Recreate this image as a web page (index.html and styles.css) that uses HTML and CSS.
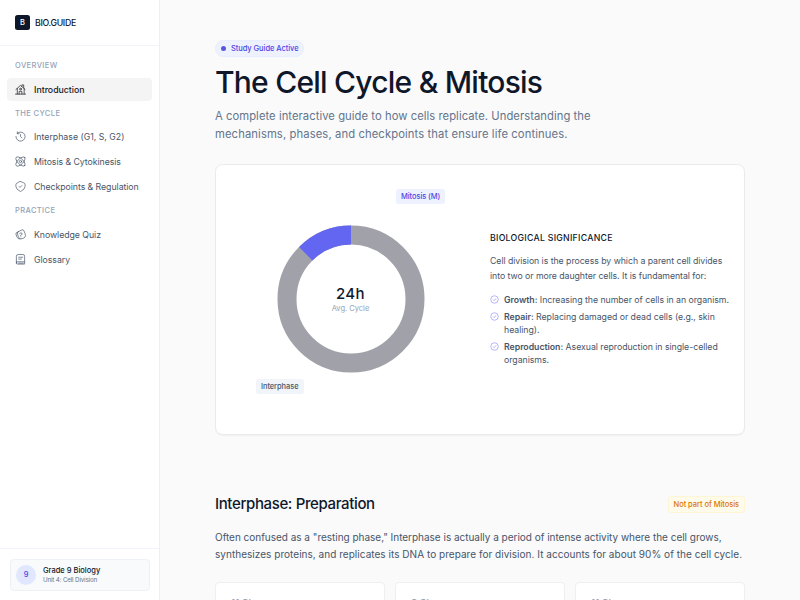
FILE: index.html
```html
<!DOCTYPE html>
<html lang="en">
<head>
    <meta charset="UTF-8">
    <meta name="viewport" content="width=device-width, initial-scale=1.0">
    <title>The Cell Cycle &amp; Mitosis</title>
    <link rel="stylesheet" href="styles.css">
</head>
<body>
    <aside class="sidebar">
        <div class="brand">
            <span class="brand-logo">B</span>
            <span class="brand-name">BIO.GUIDE</span>
        </div>

        <nav class="nav">
            <p class="nav-title">OVERVIEW</p>
            <a class="nav-item active">
                <svg class="icon" viewBox="0 0 24 24"><path d="M1 22h22M2 12l10-9 10 9M5 10v12M20 10v12M15 5V2h4v6M9 22v-6h6v6"/><circle cx="12" cy="11" r="2"/></svg>
                <span>Introduction</span>
            </a>
            <p class="nav-title cycle">THE CYCLE</p>
            <a class="nav-item">
                <svg class="icon" viewBox="0 0 24 24"><path d="M5 5a10 10 0 1 1-3 7M5 2v4h4M12 8v4l3 3"/></svg>
                <span>Interphase (G1, S, G2)</span>
            </a>
            <a class="nav-item">
                <svg class="icon" viewBox="0 0 24 24"><ellipse cx="12" cy="12" rx="13" ry="6" transform="rotate(45 12 12)"/><ellipse cx="12" cy="12" rx="13" ry="6" transform="rotate(-45 12 12)"/><circle cx="12" cy="12" r="2.5"/></svg>
                <span class="tight">Mitosis &amp; Cytokinesis</span>
            </a>
            <a class="nav-item">
                <svg class="icon" viewBox="0 0 24 24"><path d="M12 1l7 3q3 1 3 4v4q0 6-10 11Q2 18 2 12V8q0-3 3-4zM9 12l2 2 4-4"/></svg>
                <span class="tight">Checkpoints &amp; Regulation</span>
            </a>
            <p class="nav-title practice">PRACTICE</p>
            <a class="nav-item">
                <svg class="icon" viewBox="0 0 24 24"><path d="M7 6l8-4q3-1 4 1l3 7q3 9-6 11-7 2-9-5L5 9q-1-2 2-3zM6 7q-5 1-4 4l2 6q2 5 7 5M10 10q3-3 5-1t-1 4l-2 1M13 17v.1"/></svg>
                <span class="tight">Knowledge Quiz</span>
            </a>
            <a class="nav-item">
                <svg class="icon" viewBox="0 0 24 24"><path d="M3 17V5q0-4 4-4h10q4 0 4 4v12H6q-3 0-3 3 0 2 3 2h15v-5M3 17v3M8 7h9M8 11h6M8 20h10"/></svg>
                <span class="tight">Glossary</span>
            </a>
        </nav>

        <div class="sidebar-footer">
            <div class="class-card">
                <span class="grade">9</span>
                <div>
                    <p class="class-name">Grade 9 Biology</p>
                    <p class="class-unit">Unit 4: Cell Division</p>
                </div>
            </div>
        </div>
    </aside>

    <main class="content">
        <div class="status"><span class="dot"></span><span>Study Guide Active</span></div>
        <h1>The Cell Cycle &amp; Mitosis</h1>
        <p class="lead">A complete interactive guide to how cells replicate. Understanding the<br><span class="lead-end">mechanisms, phases, and checkpoints that ensure life continues.</span></p>

        <section class="overview">
            <div class="chart">
                <svg class="donut" viewBox="0 0 148 148">
                    <circle class="ring" cx="74" cy="74" r="64"/>
                    <path class="slice" d="M28.75 28.75A64 64 0 0 1 74 10"/>
                </svg>
                <div class="chart-label">
                    <span class="hours">24h</span>
                    <span class="avg">Avg. Cycle</span>
                </div>
                <span class="tag tag-mitosis">Mitosis (M)</span>
                <span class="tag tag-interphase">Interphase</span>
            </div>
            <div class="facts">
                <h2>BIOLOGICAL SIGNIFICANCE</h2>
                <p class="facts-text">Cell division is the process by which a parent cell divides<br>into two or more daughter cells. It is fundamental for:</p>
                <ul>
                    <li>
                        <svg class="check" viewBox="0 0 24 24"><circle cx="12" cy="12" r="10"/><path d="M8 12l3 3 5-6"/></svg>
                        <span><strong>Growth:</strong> Increasing the number of cells in an organism.</span>
                    </li>
                    <li>
                        <svg class="check" viewBox="0 0 24 24"><circle cx="12" cy="12" r="10"/><path d="M8 12l3 3 5-6"/></svg>
                        <span><strong>Repair:</strong> Replacing damaged or dead cells (e.g., skin<br>healing).</span>
                    </li>
                    <li>
                        <svg class="check" viewBox="0 0 24 24"><circle cx="12" cy="12" r="10"/><path d="M8 12l3 3 5-6"/></svg>
                        <span><strong>Reproduction:</strong> Asexual reproduction in single-celled<br>organisms.</span>
                    </li>
                </ul>
            </div>
        </section>

        <section class="interphase">
            <div class="section-head">
                <h2>Interphase: Preparation</h2>
                <span class="badge">Not part of Mitosis</span>
            </div>
            <p class="section-text">Often confused as a "resting phase," Interphase is actually a period of intense activity where the cell grows,<br><span class="section-end">synthesizes proteins, and replicates its DNA to prepare for division. It accounts for about 90% of the cell cycle.</span></p>
            <div class="phases">
                <div class="phase">11 Shr</div>
                <div class="phase">8 Shr</div>
                <div class="phase">11 Shr</div>
            </div>
        </section>
    </main>
</body>
</html>
```
FILE: styles.css
```css
* {
    box-sizing: border-box;
}
body {
    margin: 0;
    height: 600px;
    display: flex;
    overflow: hidden;
    background: #fafafa;
    color: #475569;
    font-family: Inter, sans-serif;
}
h1, h2, p, ul {
    margin: 0;
    padding: 0;
}
span {
    white-space: nowrap;
}
.sidebar {
    width: 160px;
    height: 600px;
    flex-shrink: 0;
    display: flex;
    flex-direction: column;
    background: white;
    border-right: 1px solid #edeff2;
}
.brand {
    height: 46px;
    padding: 0 15px;
    display: flex;
    align-items: center;
    gap: 5px;
    border-bottom: 1px solid #f1f5f9;
}
.brand-logo {
    width: 15px;
    height: 15px;
    border-radius: 2.5px;
    background: #0f172a;
    color: white;
    font-size: 7.5px;
    font-weight: 500;
    line-height: 15px;
    text-align: center;
}
.brand-name {
    color: #0f172a;
    font-size: 8.75px;
    font-weight: 500;
    letter-spacing: -0.32px;
}
.nav {
    flex: 1;
    padding: 14px 7px 0 7px;
}
.nav-title {
    height: 11px;
    line-height: 11px;
    padding-left: 8px;
    margin-bottom: 7px;
    color: #94a3b8;
    font-size: 7.5px;
    font-weight: 500;
    letter-spacing: 0.4px;
}
.nav-title.cycle {
    margin-top: 7px;
    margin-bottom: 6px;
}
.nav-title.practice {
    margin-top: 7px;
    margin-bottom: 7px;
}
.nav-item {
    height: 23px;
    padding-left: 8px;
    margin-bottom: 2px;
    display: flex;
    align-items: center;
    gap: 8px;
    border-radius: 4px;
    font-size: 8.75px;
}
.nav-item.active {
    background: #f4f4f5;
    color: #18181b;
    font-weight: 500;
}
.tight {
    letter-spacing: -0.05px;
}
.icon {
    width: 11px;
    height: 11px;
    overflow: visible;
    fill: none;
    stroke: currentColor;
    stroke-width: 1.5;
    stroke-linecap: round;
    stroke-linejoin: round;
}
.sidebar-footer {
    height: 52px;
    padding: 10px 9px 9px 10px;
    border-top: 1px solid #f1f5f9;
}
.class-card {
    height: 32px;
    padding-left: 5px;
    display: flex;
    align-items: center;
    gap: 7px;
    background: #f8fafc;
    border: 1px solid #edf1f6;
    border-radius: 4px;
}
.grade {
    width: 20px;
    height: 20px;
    border-radius: 50%;
    background: #e0e7ff;
    color: #4f46e5;
    font-size: 7.5px;
    font-weight: 500;
    line-height: 20px;
    text-align: center;
}
.class-name {
    color: #0f172a;
    font-size: 7.5px;
    font-weight: 500;
    line-height: 10px;
}
.class-unit {
    color: #64748b;
    font-size: 6.25px;
    line-height: 9px;
    letter-spacing: -0.17px;
}
.content {
    width: 530px;
    margin-left: 55px;
    padding-top: 40px;
    flex-shrink: 0;
}
.status {
    width: 89px;
    height: 17px;
    padding-left: 5px;
    display: flex;
    align-items: center;
    gap: 5px;
    background: #eef2ff;
    border: 1px solid #e8edff;
    border-radius: 9px;
    color: #4f46e5;
    font-size: 7.5px;
    font-weight: 500;
    letter-spacing: -0.06px;
}
.dot {
    width: 5px;
    height: 5px;
    border-radius: 50%;
    background: #5b57dc;
}
h1 {
    margin-top: 6px;
    height: 38px;
    color: #0f172a;
    font-size: 30px;
    font-weight: 500;
    line-height: 38px;
    letter-spacing: -0.77px;
    white-space: nowrap;
}
.lead {
    margin-top: 6px;
    height: 36px;
    color: #64748b;
    font-size: 11.25px;
    line-height: 18px;
    letter-spacing: 0.045px;
}
.lead-end {
    letter-spacing: 0.1px;
}
.overview {
    margin-top: 21px;
    height: 271px;
    display: grid;
    grid-template-columns: 274px 1fr;
    background: white;
    border: 1px solid #e9eaed;
    border-radius: 7.5px;
    box-shadow: 0 1px 1px rgba(0,0,0,0.04);
}
.chart {
    position: relative;
    padding-bottom: 2px;
    display: flex;
    align-items: center;
    justify-content: center;
}
.donut {
    width: 148px;
    height: 148px;
    margin-right: 5px;
    fill: none;
    stroke-width: 19;
}
.ring {
    stroke: #a1a1aa;
}
.slice {
    stroke: #6366f1;
}
.chart-label {
    position: absolute;
    left: 0;
    top: 119px;
    width: 269px;
    display: flex;
    flex-direction: column;
    align-items: center;
}
.hours {
    color: #0f172a;
    font-size: 15px;
    font-weight: 500;
    line-height: 20px;
    letter-spacing: 0.4px;
}
.avg {
    color: #94a3b8;
    font-size: 7.5px;
    line-height: 10px;
}
.tag {
    position: absolute;
    height: 15px;
    padding: 0 5px;
    border-radius: 2.5px;
    background: #eef2ff;
    color: #4f46e5;
    font-size: 7.5px;
    font-weight: 500;
    line-height: 15px;
    letter-spacing: -0.08px;
}
.tag-mitosis {
    left: 180px;
    top: 24px;
}
.tag-interphase {
    left: 40px;
    top: 214px;
    background: #f1f5f9;
    color: #475569;
}
.facts {
    padding-top: 67px;
}
.facts h2 {
    height: 12px;
    color: #0f172a;
    font-size: 8.75px;
    font-weight: 500;
    line-height: 12px;
    letter-spacing: 0.26px;
}
.facts-text {
    margin-top: 10px;
    font-size: 8.75px;
    line-height: 15px;
    letter-spacing: -0.05px;
}
.facts ul {
    margin-top: 10px;
    list-style: none;
}
.facts li {
    display: flex;
    gap: 5px;
    margin-bottom: 4px;
    font-size: 8.75px;
    line-height: 13px;
    letter-spacing: -0.035px;
}
.facts strong {
    font-weight: 600;
}
.check {
    width: 9px;
    height: 9px;
    margin-top: 1px;
    flex-shrink: 0;
    fill: none;
    stroke: #8b8cf5;
    stroke-width: 1.7;
}
.interphase {
    margin-top: 57px;
}
.section-head {
    height: 24px;
    display: flex;
    align-items: center;
    justify-content: space-between;
}
.section-head h2 {
    margin-top: -2px;
    color: #0f172a;
    font-size: 15px;
    font-weight: 500;
    letter-spacing: -0.37px;
}
.badge {
    height: 17px;
    padding: 0 5px;
    background: #fffbeb;
    border: 1px solid #fef5d5;
    border-radius: 2.5px;
    color: #d97706;
    font-size: 7.5px;
    font-weight: 500;
    line-height: 15px;
    letter-spacing: -0.05px;
}
.section-text {
    margin-top: 13px;
    font-size: 10px;
    line-height: 17px;
    letter-spacing: -0.02px;
}
.section-end {
    letter-spacing: 0.035px;
}
.phases {
    margin-top: 19px;
    display: grid;
    grid-template-columns: repeat(3, 1fr);
    gap: 10px;
}
.phase {
    height: 100px;
    padding: 14px 15px;
    background: white;
    border: 1px solid #eeeff1;
    border-radius: 4px;
    color: #a1a1aa;
    font-size: 10px;
    font-weight: 500;
}
```
